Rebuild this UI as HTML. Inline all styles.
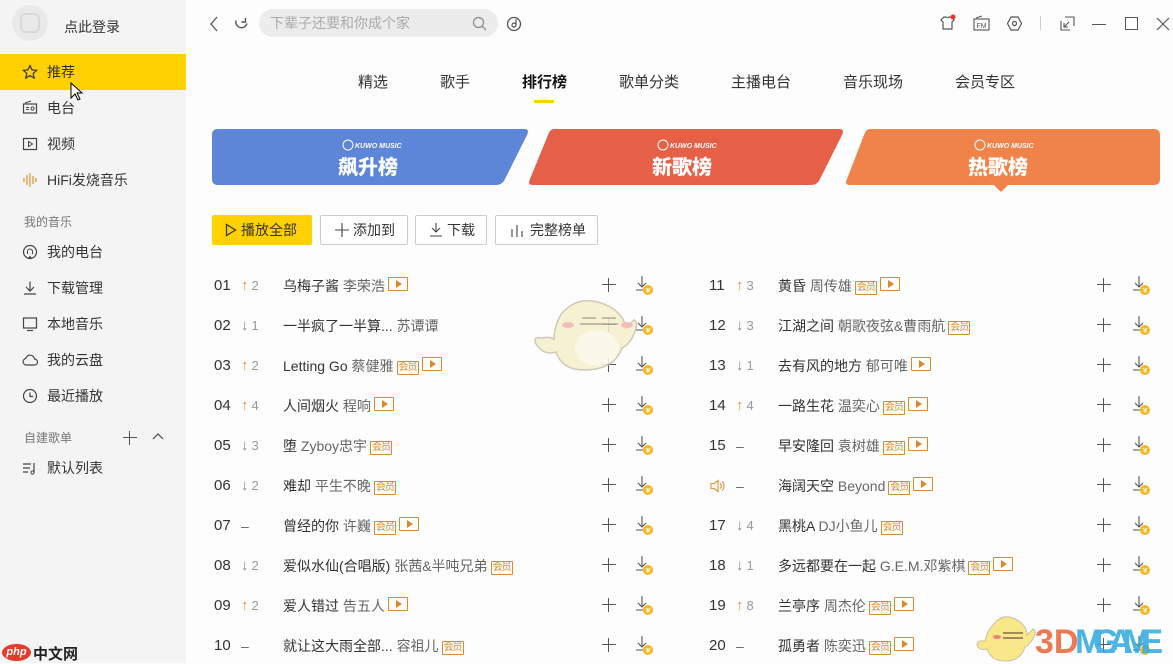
<!DOCTYPE html>
<html><head><meta charset="utf-8"><style>
*{margin:0;padding:0;box-sizing:border-box}
body{width:1173px;height:663px;overflow:hidden;background:#fdfdfd;font-family:"Liberation Sans","Noto Sans CJK SC",sans-serif;color:#333;position:relative}
.a{position:absolute}
#side{left:0;top:0;width:186px;height:663px;background:#f4f4f4}
.mi{position:absolute;left:0;width:186px;height:36px;font-size:14px;color:#333;line-height:36px;padding-left:47px}
.mi svg{position:absolute;left:22px;top:10px}
.sec{position:absolute;left:24px;font-size:12px;color:#777}
.tab{position:absolute;top:71px;font-size:15px;color:#333}
.btn{position:absolute;top:215px;height:30px;border:1px solid #ccc;border-radius:2px;font-size:14px;line-height:28px;color:#333;background:#fff}
.row{position:absolute;height:20px;width:460px;font-size:14px;line-height:20px}
.row .n{position:absolute;left:0;color:#333;font-size:15px}
.row .ch{position:absolute;left:27px;color:#999;font-size:13px}
.row .t{position:absolute;left:69px;white-space:nowrap;color:#333}
.row .t i{font-style:normal;color:#666}
.up{color:#e0922f;font-weight:bold;font-size:15px;margin-right:3px}
.dn{color:#888;font-weight:bold;font-size:15px;margin-right:3px}
.vip{display:inline-block;border:1px solid #d98a2b;color:#d98a2b;font-size:10px;line-height:12px;height:14px;padding:0 1px;vertical-align:1px;margin-left:3px;border-radius:1px;letter-spacing:-1px}
.mv{display:inline-block;border:1px solid #d98a2b;width:20px;height:14px;vertical-align:0px;margin-left:3px;position:relative;border-radius:1px}
.mv:after{content:"";position:absolute;left:7px;top:2px;border-left:6px solid #d98a2b;border-top:4px solid transparent;border-bottom:4px solid transparent}
.pl{position:absolute;width:14px;height:14px}
.pl:before{content:"";position:absolute;left:6px;top:0;width:1.2px;height:14px;background:#555}
.pl:after{content:"";position:absolute;top:6px;left:0;height:1.2px;width:14px;background:#555}
</style></head><body>
<div id="side" class="a">
 <div class="a" style="left:12px;top:5px;width:36px;height:36px;border-radius:50%;background:#e9e9e9"><div class="a" style="left:8px;top:8px;width:20px;height:20px;border:2px solid #d8d8d8;border-radius:6px"></div></div>
 <div class="a" style="left:64px;top:17px;font-size:14px;color:#333">点此登录</div>
 <div class="mi" style="top:54px;background:#ffd100"><svg width="16" height="16" viewBox="0 0 16 16"><path d="M8 1.5l2 4.3 4.6.5-3.4 3.1 1 4.6L8 11.6 3.8 14l1-4.6L1.4 6.3 6 5.8z" fill="none" stroke="#333" stroke-width="1.2"/></svg>推荐</div>
 <svg class="a" style="left:70px;top:82px" width="14" height="20" viewBox="0 0 14 20"><path d="M1 1v15l4-4 3 6 2-1-3-6h5z" fill="#fff" stroke="#000" stroke-width="1"/></svg>
 <div class="mi" style="top:90px"><svg width="16" height="16" viewBox="0 0 16 16"><rect x="1.5" y="4" width="13" height="9" fill="none" stroke="#444" stroke-width="1.2"/><path d="M3 3l6-2" stroke="#444"/><circle cx="10.5" cy="8.5" r="1.6" fill="none" stroke="#444"/><path d="M4 7.5h3M4 9.5h3" stroke="#444"/></svg>电台</div>
 <div class="mi" style="top:126px"><svg width="16" height="16" viewBox="0 0 16 16"><rect x="1.5" y="2.5" width="13" height="11" fill="none" stroke="#444" stroke-width="1.2"/><path d="M6.5 5.5v5l4-2.5z" fill="none" stroke="#444"/></svg>视频</div>
 <div class="mi" style="top:162px"><svg width="16" height="16" viewBox="0 0 16 16"><path d="M2 6v4M5 3v10M8 1v14M11 4v8M14 6v4" stroke="#e0922f" stroke-width="1.2"/></svg>HiFi发烧音乐</div>
 <div class="sec" style="top:213px">我的音乐</div>
 <div class="mi" style="top:234px"><svg width="16" height="16" viewBox="0 0 16 16"><circle cx="8" cy="8" r="6.5" fill="none" stroke="#444" stroke-width="1.2"/><path d="M5.5 10V7.5a2.5 2.5 0 015 0V10" fill="none" stroke="#444"/><path d="M6 14.5h4l-2-3z" fill="#444"/></svg>我的电台</div>
 <div class="mi" style="top:270px"><svg width="16" height="16" viewBox="0 0 16 16"><path d="M8 1.5v9M4 7l4 4 4-4M2 14h12" fill="none" stroke="#444" stroke-width="1.2"/></svg>下载管理</div>
 <div class="mi" style="top:306px"><svg width="16" height="16" viewBox="0 0 16 16"><rect x="1.5" y="2" width="13" height="10" fill="none" stroke="#444" stroke-width="1.2"/><path d="M5 14.5h6" stroke="#444" stroke-width="1.2"/></svg>本地音乐</div>
 <div class="mi" style="top:342px"><svg width="16" height="16" viewBox="0 0 16 16"><path d="M4 13h8.5a3 3 0 000-6 4.5 4.5 0 00-8.8-.5A3.3 3.3 0 004 13z" fill="none" stroke="#444" stroke-width="1.2"/></svg>我的云盘</div>
 <div class="mi" style="top:378px"><svg width="16" height="16" viewBox="0 0 16 16"><circle cx="8" cy="8" r="6.5" fill="none" stroke="#444" stroke-width="1.2"/><path d="M8 4.5V8.5h3" fill="none" stroke="#444" stroke-width="1.2"/></svg>最近播放</div>
 <div class="sec" style="top:429px">自建歌单</div>
 <div class="pl" style="left:123px;top:431px"></div>
 <svg class="a" style="left:152px;top:432px" width="12" height="8" viewBox="0 0 12 8"><path d="M1 7l5-5 5 5" fill="none" stroke="#444" stroke-width="1.2"/></svg>
 <div class="mi" style="top:450px"><svg width="16" height="16" viewBox="0 0 16 16"><path d="M1 4h8M1 8h7M1 12h5M12 3v9.5" fill="none" stroke="#444" stroke-width="1.2"/><circle cx="10.5" cy="12.5" r="1.6" fill="none" stroke="#444"/></svg>默认列表</div>
 <div class="a" style="left:2px;top:644px;width:29px;height:17px;border-radius:50%;background:#e63a2b;color:#fff;font-size:11px;font-style:italic;font-weight:bold;text-align:center;line-height:17px">php</div>
 <div class="a" style="left:33px;top:643px;font-size:15px;color:#222;font-weight:bold">中文网</div>
</div>

<svg class="a" style="left:209px;top:16px" width="10" height="16" viewBox="0 0 10 16"><path d="M8 1L2 8l6 7" fill="none" stroke="#555" stroke-width="1.3"/></svg>
<svg class="a" style="left:233px;top:15px" width="17" height="17" viewBox="0 0 17 17"><path d="M14 8.5A5.5 5.5 0 113 5.5M12.5 3v4h-4" fill="none" stroke="#555" stroke-width="1.4"/></svg>
<div class="a" style="left:259px;top:9px;width:239px;height:28px;border-radius:14px;background:#ececec;font-size:14px;color:#aaa;line-height:28px;padding-left:11px">下辈子还要和你成个家</div>
<svg class="a" style="left:472px;top:16px" width="15" height="15" viewBox="0 0 15 15"><circle cx="6.5" cy="6.5" r="5" fill="none" stroke="#888" stroke-width="1.2"/><path d="M10 10l4 4" stroke="#888" stroke-width="1.2"/></svg>
<svg class="a" style="left:506px;top:16px" width="16" height="16" viewBox="0 0 16 16"><circle cx="8" cy="8" r="6.5" fill="none" stroke="#555" stroke-width="1.3"/><circle cx="8" cy="9" r="2" fill="none" stroke="#555" stroke-width="1.2"/><path d="M10 9V3" stroke="#555" stroke-width="1.2"/></svg>
<svg class="a" style="left:939px;top:14px" width="18" height="18" viewBox="0 0 18 18"><path d="M5 3l-3 3 2 2v7h9V8l2-2-3-3h-2a2 2 0 01-3 0z" fill="none" stroke="#555" stroke-width="1.2"/><circle cx="14" cy="3" r="2.5" fill="#f03022"/></svg>
<svg class="a" style="left:973px;top:15px" width="17" height="16" viewBox="0 0 17 16"><rect x="1" y="4" width="15" height="11" fill="none" stroke="#555" stroke-width="1.1"/><path d="M3 3l6-2" stroke="#555"/><text x="3.5" y="13" font-size="7" fill="#555" font-family="Liberation Sans">FM</text></svg>
<svg class="a" style="left:1006px;top:15px" width="17" height="17" viewBox="0 0 17 17"><path d="M5 2h7l3.5 6.5L12 15H5L1.5 8.5z" fill="none" stroke="#555" stroke-width="1.2"/><circle cx="8.5" cy="8.5" r="2" fill="none" stroke="#555" stroke-width="1.2"/></svg>
<div class="a" style="left:1040px;top:16px;width:1px;height:14px;background:#ccc"></div>
<svg class="a" style="left:1060px;top:16px" width="15" height="15" viewBox="0 0 15 15"><path d="M5 1h9v9M1 5v9h9M4 11l5-5M4 7v4h4" fill="none" stroke="#555" stroke-width="1.1"/></svg>
<div class="a" style="left:1092px;top:24px;width:14px;height:1px;background:#555"></div>
<div class="a" style="left:1125px;top:17px;width:13px;height:13px;border:1.3px solid #555"></div>
<svg class="a" style="left:1156px;top:17px" width="14" height="14" viewBox="0 0 14 14"><path d="M1 1l12 12M13 1L1 13" stroke="#555" stroke-width="1.2"/></svg>

<div class="tab" style="left:358px">精选</div>
<div class="tab" style="left:440px">歌手</div>
<div class="tab" style="left:522px;font-weight:bold;color:#111">排行榜</div>
<div class="a" style="left:534px;top:100px;width:20px;height:3px;background:#ffd100"></div>
<div class="tab" style="left:619px">歌单分类</div>
<div class="tab" style="left:731px">主播电台</div>
<div class="tab" style="left:843px">音乐现场</div>
<div class="tab" style="left:955px">会员专区</div>

<svg class="a" style="left:210px;top:127px" width="955" height="68" viewBox="0 0 955 68">
 <path d="M8 2H314q6 0 3 6L294 54q-3 4-8 4H8q-6 0-6-6V8q0-6 6-6z" fill="#5d85d8"/>
 <path d="M344 2H629q6 0 3 6L609 54q-3 4-8 4H323q-6 0-3-6L338 8q2-6 6-6z" fill="#e65f47"/>
 <path d="M660 2H944q6 0 6 6V52q0 6-6 6H640q-6 0-3-6L654 8q2-6 6-6z" fill="#f0834a"/>
 <path d="M784 58h14l-7 7z" fill="#f0834a"/>
 <g font-family="Liberation Sans" font-style="italic" font-weight="bold" font-size="7" fill="#fff">
  <circle cx="138" cy="18" r="5" fill="none" stroke="#fff"/><text x="145" y="21">KUWO MUSIC</text>
  <circle cx="453" cy="18" r="5" fill="none" stroke="#fff"/><text x="460" y="21">KUWO MUSIC</text>
  <circle cx="770" cy="18" r="5" fill="none" stroke="#fff"/><text x="777" y="21">KUWO MUSIC</text>
 </g>
 <g font-family="Noto Sans CJK SC,sans-serif" font-weight="900" font-size="20" fill="#fff">
  <text x="128" y="47">飙升榜</text><text x="442" y="47">新歌榜</text><text x="758" y="47">热歌榜</text>
 </g>
</svg>

<div class="btn" style="left:212px;width:100px;background:#ffd100;border-color:#ffd100;padding-left:28px"><svg class="a" style="left:12px;top:7px" width="12" height="14" viewBox="0 0 12 14"><path d="M1.5 1.5v11l9-5.5z" fill="none" stroke="#333" stroke-width="1.2"/></svg>播放全部</div>
<div class="btn" style="left:320px;width:88px;padding-left:32px"><svg class="a" style="left:14px;top:7px" width="14" height="14" viewBox="0 0 14 14"><path d="M7 0v14M0 7h14" stroke="#444" stroke-width="1.1"/></svg>添加到</div>
<div class="btn" style="left:415px;width:72px;padding-left:31px"><svg class="a" style="left:13px;top:6px" width="14" height="15" viewBox="0 0 14 15"><path d="M7 1v9M3 6l4 4 4-4M1 14h12" fill="none" stroke="#444" stroke-width="1.1"/></svg>下载</div>
<div class="btn" style="left:495px;width:103px;padding-left:34px"><svg class="a" style="left:14px;top:9px" width="14" height="12" viewBox="0 0 14 12"><path d="M2 4v8M7 0v12M12 6v6" stroke="#444" stroke-width="1.1"/></svg>完整榜单</div>

<div class="row" style="left:214px;top:276px"><span class="n">01</span><span class="ch"><b class="up">↑</b>2</span><span class="t">乌梅子酱 <i>李荣浩</i><span class="mv"></span></span></div>
<div class="row" style="left:214px;top:316px"><span class="n">02</span><span class="ch"><b class="dn">↓</b>1</span><span class="t">一半疯了一半算... <i>苏谭谭</i></span></div>
<div class="row" style="left:214px;top:356px"><span class="n">03</span><span class="ch"><b class="up">↑</b>2</span><span class="t">Letting Go <i>蔡健雅</i><span class="vip">会员</span><span class="mv"></span></span></div>
<div class="row" style="left:214px;top:396px"><span class="n">04</span><span class="ch"><b class="up">↑</b>4</span><span class="t">人间烟火 <i>程响</i><span class="mv"></span></span></div>
<div class="row" style="left:214px;top:436px"><span class="n">05</span><span class="ch"><b class="dn">↓</b>3</span><span class="t">堕 <i>Zyboy忠宇</i><span class="vip">会员</span></span></div>
<div class="row" style="left:214px;top:476px"><span class="n">06</span><span class="ch"><b class="dn">↓</b>2</span><span class="t">难却 <i>平生不晚</i><span class="vip">会员</span></span></div>
<div class="row" style="left:214px;top:516px"><span class="n">07</span><span class="ch" style="font-size:14px;color:#666">–</span><span class="t">曾经的你 <i>许巍</i><span class="vip">会员</span><span class="mv"></span></span></div>
<div class="row" style="left:214px;top:556px"><span class="n">08</span><span class="ch"><b class="dn">↓</b>2</span><span class="t">爱似水仙(合唱版) <i>张茜&amp;半吨兄弟</i><span class="vip">会员</span></span></div>
<div class="row" style="left:214px;top:596px"><span class="n">09</span><span class="ch"><b class="up">↑</b>2</span><span class="t">爱人错过 <i>告五人</i><span class="mv"></span></span></div>
<div class="row" style="left:214px;top:636px"><span class="n">10</span><span class="ch" style="font-size:14px;color:#666">–</span><span class="t">就让这大雨全部... <i>容祖儿</i><span class="vip">会员</span></span></div>

<div class="row" style="left:709px;top:276px"><span class="n">11</span><span class="ch"><b class="up">↑</b>3</span><span class="t">黄昏 <i>周传雄</i><span class="vip">会员</span><span class="mv"></span></span></div>
<div class="row" style="left:709px;top:316px"><span class="n">12</span><span class="ch"><b class="dn">↓</b>3</span><span class="t">江湖之间 <i>朝歌夜弦&amp;曹雨航</i><span class="vip">会员</span></span></div>
<div class="row" style="left:709px;top:356px"><span class="n">13</span><span class="ch"><b class="dn">↓</b>1</span><span class="t">去有风的地方 <i>郁可唯</i><span class="mv"></span></span></div>
<div class="row" style="left:709px;top:396px"><span class="n">14</span><span class="ch"><b class="up">↑</b>4</span><span class="t">一路生花 <i>温奕心</i><span class="vip">会员</span><span class="mv"></span></span></div>
<div class="row" style="left:709px;top:436px"><span class="n">15</span><span class="ch" style="font-size:14px;color:#666">–</span><span class="t">早安隆回 <i>袁树雄</i><span class="vip">会员</span><span class="mv"></span></span></div>
<div class="row" style="left:709px;top:476px"><svg class="a" style="left:1px;top:3px" width="15" height="14" viewBox="0 0 15 14"><path d="M1 4.5h3l4-3v11l-4-3H1z" fill="none" stroke="#e0922f" stroke-width="1.1"/><path d="M10 4.5a3 3 0 010 5M12 2.5a6 6 0 010 9" fill="none" stroke="#e0922f" stroke-width="1.1"/></svg><span class="ch" style="font-size:14px;color:#666">–</span><span class="t">海阔天空 <i>Beyond</i><span class="vip">会员</span><span class="mv"></span></span></div>
<div class="row" style="left:709px;top:516px"><span class="n">17</span><span class="ch"><b class="dn">↓</b>4</span><span class="t">黑桃A <i>DJ小鱼儿</i><span class="vip">会员</span></span></div>
<div class="row" style="left:709px;top:556px"><span class="n">18</span><span class="ch"><b class="dn">↓</b>1</span><span class="t">多远都要在一起 <i>G.E.M.邓紫棋</i><span class="vip">会员</span><span class="mv"></span></span></div>
<div class="row" style="left:709px;top:596px"><span class="n">19</span><span class="ch"><b class="up">↑</b>8</span><span class="t">兰亭序 <i>周杰伦</i><span class="vip">会员</span><span class="mv"></span></span></div>
<div class="row" style="left:709px;top:636px"><span class="n">20</span><span class="ch" style="font-size:14px;color:#666">–</span><span class="t">孤勇者 <i>陈奕迅</i><span class="vip">会员</span><span class="mv"></span></span></div>

<div class="pl" style="left:602px;top:278px"></div><div class="pl" style="left:602px;top:318px"></div><div class="pl" style="left:602px;top:358px"></div><div class="pl" style="left:602px;top:398px"></div><div class="pl" style="left:602px;top:438px"></div><div class="pl" style="left:602px;top:478px"></div><div class="pl" style="left:602px;top:518px"></div><div class="pl" style="left:602px;top:558px"></div><div class="pl" style="left:602px;top:598px"></div><div class="pl" style="left:602px;top:638px"></div>
<div class="pl" style="left:1097px;top:278px"></div><div class="pl" style="left:1097px;top:318px"></div><div class="pl" style="left:1097px;top:358px"></div><div class="pl" style="left:1097px;top:398px"></div><div class="pl" style="left:1097px;top:438px"></div><div class="pl" style="left:1097px;top:478px"></div><div class="pl" style="left:1097px;top:518px"></div><div class="pl" style="left:1097px;top:558px"></div><div class="pl" style="left:1097px;top:598px"></div><div class="pl" style="left:1097px;top:638px"></div>

<svg class="a" style="left:636px;top:276px" width="20" height="380" viewBox="0 0 20 380">
<defs><g id="d"><path d="M6 0v11M2 7l4 4 4-4M0 14h8" fill="none" stroke="#555" stroke-width="1.1"/><circle cx="12" cy="14" r="5" fill="#f5b722"/><path d="M10 12l2 2 2-2M12 14v3M10 15h4" stroke="#fff" stroke-width="0.9" fill="none"/></g></defs>
<use href="#d" y="0"/><use href="#d" y="40"/><use href="#d" y="80"/><use href="#d" y="120"/><use href="#d" y="160"/><use href="#d" y="200"/><use href="#d" y="240"/><use href="#d" y="280"/><use href="#d" y="320"/><use href="#d" y="360"/>
</svg>
<svg class="a" style="left:1133px;top:276px" width="20" height="380" viewBox="0 0 20 380">
<use href="#d" y="0"/><use href="#d" y="40"/><use href="#d" y="80"/><use href="#d" y="120"/><use href="#d" y="160"/><use href="#d" y="200"/><use href="#d" y="240"/><use href="#d" y="280"/><use href="#d" y="320"/><use href="#d" y="360"/>
</svg>

<svg class="a" style="left:532px;top:288px" width="110" height="90" viewBox="0 0 110 90" opacity="0.85">
 <path d="M30 25q20-22 50-5 12 8 14 20l8-8q5 2 0 14-4 10-12 14-8 22-38 22-22 0-28-18-12 4-20-8-4-8 6-6 10-2 12 2q0-15 8-27z" fill="#f6efcc" stroke="#c9bfae" stroke-width="1.5"/>
 <ellipse cx="65" cy="60" rx="22" ry="18" fill="#fbf7e6"/>
 <ellipse cx="36" cy="37" rx="6" ry="3" fill="#f4b0b0"/><ellipse cx="95" cy="37" rx="6" ry="3" fill="#f4b0b0"/>
 <path d="M50 30h14M70 30h14M48 36h38" stroke="#a89a88" stroke-width="1.5"/>
</svg>
<svg class="a" style="left:975px;top:605px" width="190" height="58" viewBox="0 0 190 58">
 <path d="M18 20q10-14 26-4 8 6 8 14l6-6q4 2 0 10-4 6-8 8-4 14-20 14-14 0-18-12-8 2-10-4 0-5 8-4 2-10 8-16z" fill="#f8e88a" stroke="#c9bfae"/>
 <ellipse cx="22" cy="32" rx="4" ry="2" fill="#f08080"/><path d="M28 28h20M28 33h20" stroke="#8a6a4a" stroke-width="1.5"/>
 <text x="60" y="48" font-family="Liberation Sans" font-weight="bold" font-size="34" fill="#ee6a3e" opacity="0.9">3D</text>
 <text x="100" y="48" font-family="Liberation Sans" font-weight="bold" font-size="34" fill="#2ea9e0" opacity="0.85" textLength="88">MGAME</text>
</svg>
</body></html>
